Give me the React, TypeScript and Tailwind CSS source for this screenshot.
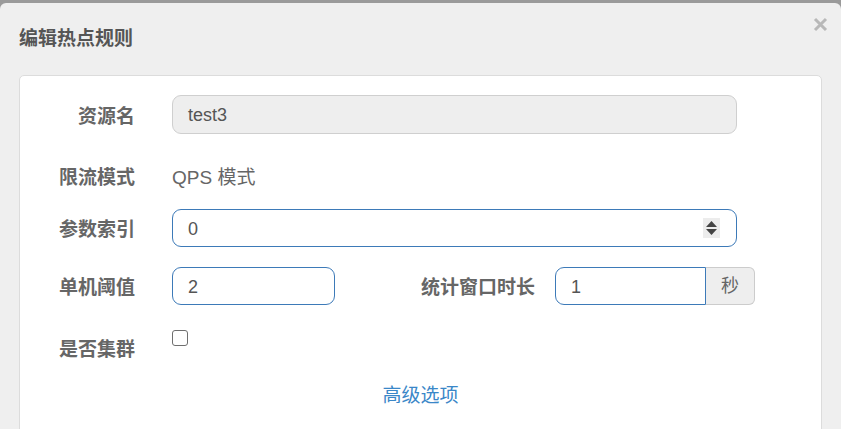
import React from "react";

const font = {
  fontFamily: '"Liberation Sans", "Noto Sans CJK SC", sans-serif',
};

function Label({ children, w = "w-[115px]" }: { children: React.ReactNode; w?: string }) {
  return (
    <div className={`${w} shrink-0 pt-[4px] text-right text-[19px] leading-[26px] font-bold text-[#666]`}>
      {children}
    </div>
  );
}

export default function App() {
  return (
    <div className="w-[841px] h-[429px] overflow-hidden bg-[#9a9a9a] pt-[3px]" style={font}>
      <div className="relative h-full bg-[#efefef] rounded-t-[6px] px-[19px]">
        {/* header */}
        <div className="h-[72px] pt-[23px]">
          <h4 className="text-[19px] leading-[26px] font-bold text-[#555]">编辑热点规则</h4>
        </div>
        <button className="absolute right-[13px] top-[13px] w-[16px] h-[16px] flex items-center justify-center">
          <svg width="15" height="15" viewBox="0 0 15 15">
            <path d="M2 2 L13 13 M13 2 L2 13" stroke="#b8b8b8" strokeWidth="3" strokeLinecap="butt" />
          </svg>
        </button>

        {/* body card */}
        <div className="h-[400px] bg-white border border-[#dcdcdc] rounded-[5px] pt-[19px]">
          {/* 资源名 */}
          <div className="flex items-center h-[39px]">
            <Label>资源名</Label>
            <div className="ml-[37px] w-[565px] h-[39px] rounded-[9px] border border-[#cfcfcf] bg-[#eeeeee] pl-[15px] pt-[2px] flex items-center text-[18px] text-[#555]">
              test3
            </div>
          </div>

          {/* 限流模式 */}
          <div className="flex items-center h-[44px] mt-[20px]">
            <Label>限流模式</Label>
            <div className="ml-[37px] pt-[4px] text-[19px] leading-[26px] text-[#666]">QPS 模式</div>
          </div>

          {/* 参数索引 */}
          <div className="flex items-center h-[38px] mt-[11px]">
            <Label>参数索引</Label>
            <div className="ml-[37px] w-[565px] h-[38px] rounded-[9px] border border-[#3d7ab8] bg-white pl-[15px] pr-[16px] flex items-center justify-between text-[18px] text-[#555]">
              <span className="pt-[2px]">0</span>
              <div className="w-[17px] h-[20px] bg-[#ececec] flex flex-col items-center justify-center gap-[2px]">
                <svg width="11" height="6" viewBox="0 0 11 6">
                  <path d="M5.5 0 L11 6 L0 6 Z" fill="#444" />
                </svg>
                <svg width="11" height="6" viewBox="0 0 11 6">
                  <path d="M0 0 L11 0 L5.5 6 Z" fill="#444" />
                </svg>
              </div>
            </div>
          </div>

          {/* 单机阈值 / 统计窗口时长 */}
          <div className="flex items-center h-[38px] mt-[20px]">
            <Label>单机阈值</Label>
            <div className="ml-[37px] w-[163px] h-[38px] rounded-[9px] border border-[#3d7ab8] bg-white pl-[15px] pt-[2px] flex items-center text-[18px] text-[#555]">
              2
            </div>
            <Label w="w-[200px]">统计窗口时长</Label>
            <div className="ml-[20px] flex h-[38px]">
              <div className="w-[151px] h-full rounded-l-[9px] border border-[#3d7ab8] bg-white pl-[15px] pt-[2px] flex items-center text-[18px] text-[#555]">
                1
              </div>
              <div className="w-[49px] h-full rounded-r-[6px] border border-l-0 border-[#cccccc] bg-[#eeeeee] flex items-center justify-center text-[18px] text-[#666]">
                秒
              </div>
            </div>
          </div>

          {/* 是否集群 */}
          <div className="flex items-start mt-[20px]">
            <div className="pt-[8px]">
              <Label>是否集群</Label>
            </div>
            <div className="ml-[37px] mt-[5px] w-[16px] h-[16px] rounded-[3px] border border-[#6f6f6f] bg-white" />
          </div>

          {/* 高级选项 */}
          <div className="mt-[20px] text-center">
            <a className="text-[19px] leading-[26px] text-[#3a87c8] cursor-pointer">高级选项</a>
          </div>
        </div>
      </div>
    </div>
  );
}
